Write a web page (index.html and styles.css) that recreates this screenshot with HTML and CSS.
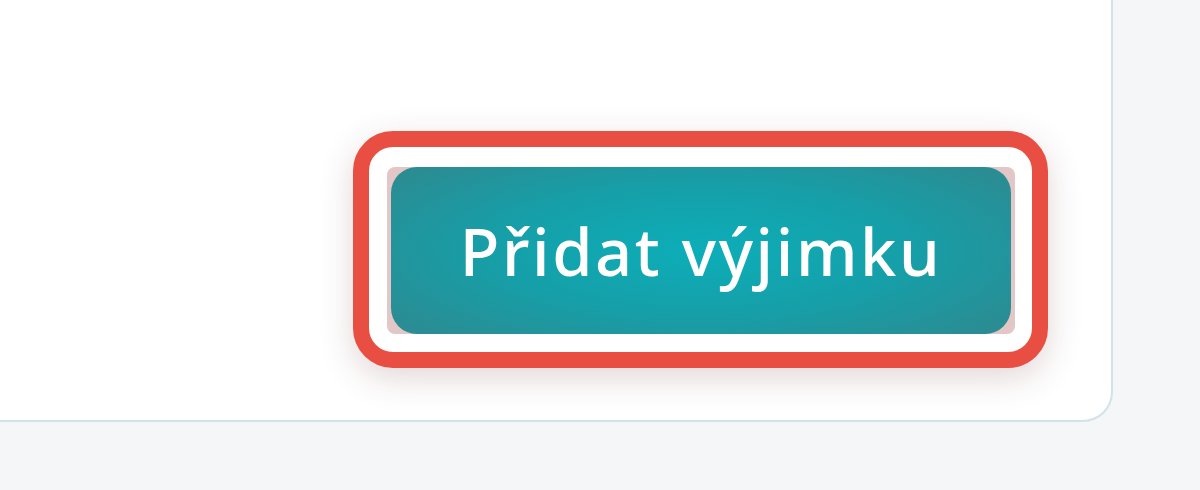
FILE: index.html
```html
<!DOCTYPE html>
<html lang="cs">
<head>
<meta charset="utf-8">
<title>Přidat výjimku</title>
<link rel="stylesheet" href="styles.css">
</head>
<body>
  <div class="card">
    <div class="highlight">
      <div class="btn-frame">
        <button class="btn" type="button">Přidat výjimku</button>
      </div>
    </div>
  </div>
</body>
</html>
```

FILE: styles.css
```css
html, body {
  margin: 0;
  padding: 0;
}
body {
  width: 1200px;
  height: 490px;
  background: #f4f6f8;
  overflow: hidden;
  font-family: "Noto Sans", "Lato", sans-serif;
}
.card {
  box-sizing: border-box;
  width: 1113px;
  height: 422px;
  background: #ffffff;
  border-right: 2px solid #d2e3e8;
  border-bottom: 2px solid #d2e3e8;
  border-bottom-right-radius: 30px;
  display: flex;
  justify-content: flex-end;
  align-items: flex-end;
  padding: 0 63px 52px 0;
}
.highlight {
  border: 16px solid #e84e41;
  border-radius: 40px;
  background: #ffffff;
  padding: 20px 17px 18px 18px;
  box-shadow: 0 10px 34px rgba(110, 50, 50, 0.2);
}
.btn-frame {
  background: #e3c7c6;
  border-radius: 8px;
  padding: 0 4px;
  display: flex;
}
.btn {
  width: 620px;
  height: 167px;
  border: none;
  border-radius: 26px;
  background: radial-gradient(ellipse 60% 70% at 50% 50%, #0caeb9 0%, #169fa8 55%, #2a8d94 100%);
  color: #ffffff;
  font-family: "Noto Sans", "Lato", sans-serif;
  font-size: 65px;
  font-weight: 500;
  letter-spacing: 2.6px;
  padding: 0;
  cursor: pointer;
}
```
